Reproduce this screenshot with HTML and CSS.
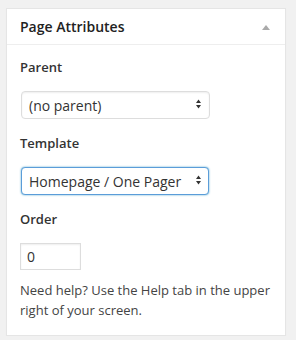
FILE: index.html
```html
<!DOCTYPE html>
<html>
<head>
<meta charset="utf-8">
<link rel="stylesheet" href="styles.css">
</head>
<body>
<div class="postbox">
  <div class="postbox-header">
    <h3 class="title">Page Attributes</h3>
    <svg class="toggle" width="8" height="5" viewBox="0 0 8 5"><path d="M0 5 L4 0 L8 5 Z" fill="#aaaaaa"/></svg>
  </div>
  <div class="inside">
    <p class="label">Parent</p>
    <div class="select-wrap">
      <select class="select"><option>(no parent)</option></select>
      <svg class="arrows" width="5" height="10" viewBox="0 0 5 10"><path d="M0 4 L2.5 0.5 L5 4 Z M0 6 L2.5 9.5 L5 6 Z" fill="#333"/></svg>
    </div>
    <p class="label">Template</p>
    <div class="select-wrap">
      <select class="select focus"><option>Homepage / One Pager</option></select>
      <svg class="arrows" width="5" height="10" viewBox="0 0 5 10"><path d="M0 4 L2.5 0.5 L5 4 Z M0 6 L2.5 9.5 L5 6 Z" fill="#333"/></svg>
    </div>
    <p class="label">Order</p>
    <input class="order" type="text" value="0">
    <p class="help">Need help? Use the Help tab in the upper right of your screen.</p>
  </div>
</div>
</body>
</html>
```
FILE: styles.css
```css
html, body {
  margin: 0;
  padding: 0;
  background: #f1f1f1;
}
body {
  padding: 8px 10px 0 6px;
  font-family: "Open Sans", "Noto Sans", sans-serif;
  color: #444;
}
.postbox {
  width: 278px;
  background: #fff;
  border: 1px solid #e5e5e5;
  box-shadow: 0 1px 1px rgba(0,0,0,0.04);
}
.postbox-header {
  height: 35px;
  border-bottom: 1px solid #eeeeee;
  display: flex;
  align-items: center;
  justify-content: space-between;
  padding: 0 15px 0 13px;
}
.title {
  margin: 0;
  font-size: 14px;
  font-weight: 600;
  line-height: 20px;
  color: #222;
  padding-top: 1px;
}
.toggle {
  display: block;
  margin-top: 1px;
}
.inside {
  padding: 13px 13px 15px 13px;
}
.label {
  margin: 0 0 15px;
  font-size: 13px;
  font-weight: 600;
  line-height: 18px;
  color: #333;
}
.select-wrap {
  position: relative;
  width: 189px;
  height: 28px;
  margin-bottom: 15px;
  margin-left: 1px;
}
.select {
  appearance: none;
  -webkit-appearance: none;
  width: 189px;
  height: 28px;
  box-sizing: border-box;
  border: 1px solid #dddddd;
  border-radius: 4px;
  background: #fff;
  box-shadow: inset 0 1px 2px rgba(0,0,0,0.07);
  font-family: "Open Sans", "Noto Sans", sans-serif;
  font-size: 14px;
  color: #333;
  padding: 0 0 0 7px;
  margin: 0;
  display: block;
  outline: none;
}
.select.focus {
  width: 188px;
  border-color: #5b9dd9;
  box-shadow: 0 0 2px rgba(30,140,190,0.8);
}
.arrows {
  position: absolute;
  right: 9px;
  top: 8px;
}
.order {
  display: block;
  width: 61px;
  height: 27px;
  box-sizing: border-box;
  border: 1px solid #dddddd;
  box-shadow: inset 0 1px 2px rgba(0,0,0,0.07);
  font-family: "Open Sans", "Noto Sans", sans-serif;
  font-size: 14px;
  color: #333;
  padding: 0 6px;
  margin: 0 0 11px 0;
  outline: none;
}
.help {
  margin: 0;
  font-size: 13px;
  line-height: 19.5px;
  color: #444;
}
```
